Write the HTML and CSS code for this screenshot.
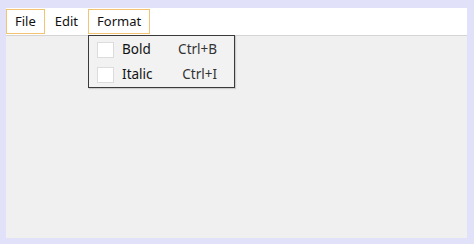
FILE: index.html
```html
<!DOCTYPE html>
<html>
<head>
<meta charset="utf-8">
<link rel="stylesheet" href="styles.css">
</head>
<body>
<div class="window">
  <div class="menubar">
    <div class="menu-item selected">File</div>
    <div class="menu-item">Edit</div>
    <div class="menu-item selected open">Format
      <div class="dropdown">
        <div class="dd-row">
          <span class="check"></span>
          <span class="label">Bold</span>
          <span class="shortcut">Ctrl+B</span>
        </div>
        <div class="dd-row">
          <span class="check"></span>
          <span class="label">Italic</span>
          <span class="shortcut">Ctrl+I</span>
        </div>
      </div>
    </div>
  </div>
  <div class="client"></div>
</div>
</body>
</html>
```
FILE: styles.css
```css
html, body {
  margin: 0;
  padding: 0;
  background: #ffffff;
}
body {
  width: 474px;
  height: 248px;
  font-family: "Noto Sans", "Open Sans", sans-serif;
  font-size: 13.5px;
  color: #111;
}
.window {
  box-sizing: border-box;
  width: 474px;
  height: 244px;
  border-style: solid;
  border-color: #e1e1fa;
  border-width: 8px 7px 6px 6px;
  background: #f0f0f0;
  display: flex;
  flex-direction: column;
}
.menubar {
  display: flex;
  align-items: flex-start;
  background: #ffffff;
  border-bottom: 1px solid #d4d4d4;
  padding-top: 1px;
  box-sizing: content-box;
  height: 26px;
}
.menu-item {
  position: relative;
  height: 23px;
  line-height: 23px;
  padding: 0 8px;
  border: 1px solid transparent;
  margin-right: 1px;
  font-size: 13px;
}
.menu-item.selected {
  border-color: #f3c272;
}
.client {
  flex: 1;
}
.dropdown {
  position: absolute;
  left: -1px;
  top: 25px;
  width: 145px;
  height: 50px;
  background: #f2f2f2;
  border: 1px solid #3a3a3a;
  box-shadow: 1px 1px 1px rgba(0,0,0,0.15);
  padding-top: 1px;
  box-sizing: content-box;
  z-index: 2;
  font-size: 13.5px;
}
.dd-row {
  display: flex;
  align-items: center;
  height: 25px;
  padding-left: 8px;
}
.check {
  width: 15px;
  height: 14px;
  border: 1px solid #dcdcdc;
  background: #ffffff;
  margin-right: 8px;
  flex: none;
}
.label {
  flex: 1;
}
.shortcut {
  color: #333;
  margin-right: 17px;
}
```
